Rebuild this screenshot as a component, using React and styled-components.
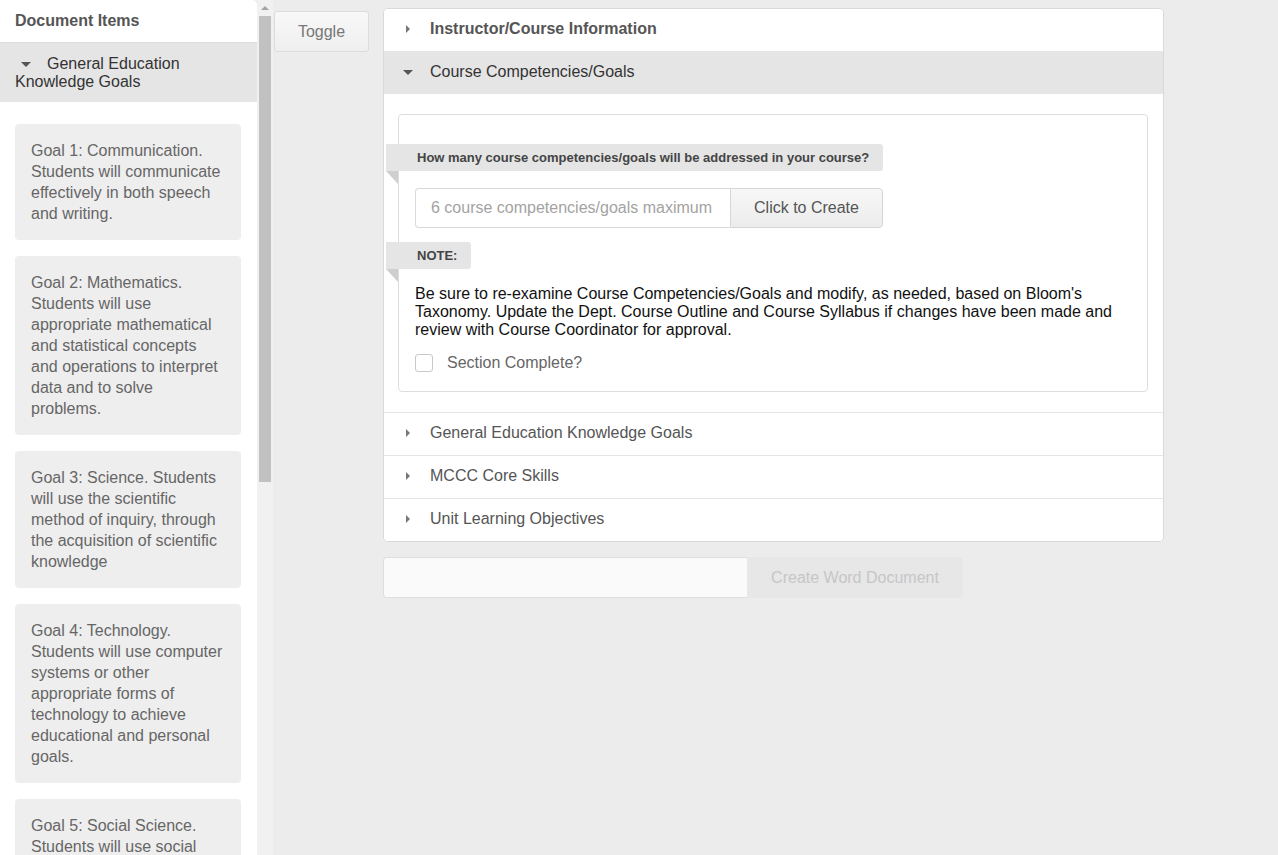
import React from "react";
import styled, { createGlobalStyle } from "styled-components";

const GlobalStyle = createGlobalStyle`
  html, body {
    margin: 0;
    padding: 0;
    height: 100%;
  }
  body {
    font-family: "Liberation Sans", Arial, sans-serif;
    background: #ececec;
  }
  * {
    box-sizing: border-box;
  }
`;

const goals = [
  "Goal 1: Communication. Students will communicate effectively in both speech and writing.",
  "Goal 2: Mathematics. Students will use appropriate mathematical and statistical concepts and operations to interpret data and to solve problems.",
  "Goal 3: Science. Students will use the scientific method of inquiry, through the acquisition of scientific knowledge",
  "Goal 4: Technology. Students will use computer systems or other appropriate forms of technology to achieve educational and personal goals.",
  "Goal 5: Social Science. Students will use social science theories and concepts to analyze human behavior and social and political institutions.",
  "Goal 6: Humanities. Students will analyze and evaluate humanistic perspectives and values.",
];

const sections = [
  { title: "Instructor/Course Information", bold: true },
  { title: "Course Competencies/Goals", open: true },
  { title: "General Education Knowledge Goals" },
  { title: "MCCC Core Skills" },
  { title: "Unit Learning Objectives" },
];

const App = () => {
  return (
    <>
      <GlobalStyle />
      <Page>
        <Sidebar>
          <SidebarHeader>Document Items</SidebarHeader>
          <GroupRow>
            <CaretSlot>
              <Caret open />
            </CaretSlot>
            General Education Knowledge Goals
          </GroupRow>
          <CardList>
            {goals.map((g) => (
              <GoalCard key={g}>{g}</GoalCard>
            ))}
          </CardList>
        </Sidebar>

        <ScrollTrack>
          <ScrollArrow />
          <ScrollThumb />
        </ScrollTrack>

        <ToggleCol>
          <ToggleButton>Toggle</ToggleButton>
        </ToggleCol>

        <Main>
          <Accordion>
            {sections.map((s) => (
              <Section key={s.title}>
                <SectionHead open={s.open} bold={s.bold}>
                  <HeadCaret>
                    <Caret open={s.open} />
                  </HeadCaret>
                  {s.title}
                </SectionHead>
                {s.open ? (
                  <SectionBody>
                    <InnerBox>
                      <Ribbon>
                        How many course competencies/goals will be addressed in
                        your course?
                      </Ribbon>
                      <InputGroup>
                        <CountInput placeholder="6 course competencies/goals maximum" />
                        <GroupButton>Click to Create</GroupButton>
                      </InputGroup>
                      <Ribbon>NOTE:</Ribbon>
                      <NoteText>
                        Be sure to re-examine Course Competencies/Goals and
                        modify, as needed, based on Bloom's Taxonomy. Update the
                        Dept. Course Outline and Course Syllabus if changes have
                        been made and review with Course Coordinator for
                        approval.
                      </NoteText>
                      <CheckRow>
                        <CheckBox />
                        Section Complete?
                      </CheckRow>
                    </InnerBox>
                  </SectionBody>
                ) : null}
              </Section>
            ))}
          </Accordion>

          <ExportRow>
            <FileInput />
            <ExportButton disabled>Create Word Document</ExportButton>
          </ExportRow>
        </Main>
      </Page>
    </>
  );
};

export default App;

const Page = styled.div`
  display: flex;
  align-items: flex-start;
  height: 100vh;
  overflow: hidden;
  background: #ececec;
`;

const Sidebar = styled.div`
  width: 257px;
  height: 100vh;
  flex-shrink: 0;
  background: #fff;
  border-top-right-radius: 5px;
  overflow: hidden;
`;

const SidebarHeader = styled.div`
  height: 43px;
  padding: 12px 15px 0;
  font-size: 16px;
  font-weight: 700;
  color: #555;
  border-bottom: 1px solid #dcdcdc;
`;

const GroupRow = styled.div`
  background: #e5e5e5;
  padding: 12px 15px 11px;
  font-size: 16px;
  line-height: 18px;
  color: #333;
`;

const CaretSlot = styled.span`
  display: inline-block;
  width: 32px;
  padding-left: 6px;
  vertical-align: middle;
  line-height: 0;
`;

const Caret = styled.span`
  display: inline-block;
  width: 0;
  height: 0;
  ${(p) =>
    p.open
      ? `
    border-left: 5px solid transparent;
    border-right: 5px solid transparent;
    border-top: 5px solid #555;
  `
      : `
    border-top: 4px solid transparent;
    border-bottom: 4px solid transparent;
    border-left: 4px solid #777;
  `}
`;

const CardList = styled.div`
  padding: 22px 16px 0 15px;
  display: flex;
  flex-direction: column;
  gap: 16px;
`;

const GoalCard = styled.div`
  background: #eee;
  border-radius: 4px;
  padding: 16px 14px 16px 16px;
  font-size: 16px;
  line-height: 21px;
  color: #666;
`;

const ScrollTrack = styled.div`
  width: 16px;
  height: 100vh;
  flex-shrink: 0;
  background: #f1f1f1;
  display: flex;
  flex-direction: column;
  align-items: center;
`;

const ScrollArrow = styled.div`
  width: 0;
  height: 0;
  margin: 6px 0 6px;
  border-left: 4px solid transparent;
  border-right: 4px solid transparent;
  border-bottom: 4px solid #a3a3a3;
`;

const ScrollThumb = styled.div`
  width: 12px;
  height: 466px;
  background: #c1c1c1;
`;

const ToggleCol = styled.div`
  padding: 11px 14px 0 1px;
  flex-shrink: 0;
`;

const ToggleButton = styled.button`
  width: 95px;
  height: 41px;
  border: 1px solid #dcdcdc;
  border-radius: 3px;
  background: linear-gradient(#f8f8f8, #efefef);
  font-family: "Liberation Sans", Arial, sans-serif;
  font-size: 16px;
  color: #777;
  cursor: pointer;
`;

const Main = styled.div`
  width: 781px;
  padding-top: 8px;
  flex-shrink: 0;
`;

const Accordion = styled.div`
  background: #fff;
  border: 1px solid #d9d9d9;
  border-radius: 5px;
  overflow: hidden;
`;

const Section = styled.div`
  & + & {
    border-top: 1px solid #e5e5e5;
  }
`;

const SectionHead = styled.div`
  height: 42px;
  display: flex;
  align-items: center;
  padding-left: 19px;
  padding-bottom: 2px;
  font-size: 16px;
  font-weight: ${(p) => (p.bold ? 700 : 400)};
  color: ${(p) => (p.open ? "#333" : "#555")};
  background: ${(p) => (p.open ? "#e5e5e5" : "#fff")};
`;

const HeadCaret = styled.span`
  width: 10px;
  margin-right: 17px;
  display: flex;
  justify-content: center;
  align-items: center;
`;

const SectionBody = styled.div`
  padding: 20px 15px 20px 14px;
`;

const InnerBox = styled.div`
  border: 1px solid #ddd;
  border-radius: 4px;
  padding: 29px 16px 19px 16px;
`;

const Ribbon = styled.div`
  position: relative;
  width: fit-content;
  margin-left: -29px;
  padding: 0 14px 0 31px;
  height: 27px;
  line-height: 27px;
  background: #e5e5e5;
  border-radius: 0 3px 3px 0;
  font-size: 13px;
  font-weight: 700;
  color: #444;

  &::after {
    content: "";
    position: absolute;
    left: 0;
    top: 100%;
    border-top: 13px solid #cfcfcf;
    border-left: 12px solid transparent;
  }
`;

const InputGroup = styled.div`
  display: flex;
  width: 468px;
  height: 40px;
  margin: 17px 0 14px;
`;

const CountInput = styled.input`
  width: 315px;
  height: 40px;
  border: 1px solid #d9d9d9;
  border-right: none;
  border-radius: 4px 0 0 4px;
  padding: 0 15px;
  font-family: "Liberation Sans", Arial, sans-serif;
  font-size: 16px;
  color: #333;
  outline: none;

  &::placeholder {
    color: #a3a3a3;
  }
`;

const GroupButton = styled.button`
  flex: 1;
  height: 40px;
  border: 1px solid #d6d6d6;
  border-radius: 0 4px 4px 0;
  background: linear-gradient(#f7f7f7, #ececec);
  font-family: "Liberation Sans", Arial, sans-serif;
  font-size: 16px;
  color: #555;
`;

const NoteText = styled.p`
  margin: 16px 0 0;
  font-size: 16px;
  line-height: 18px;
  color: #111;
`;

const CheckRow = styled.label`
  display: flex;
  align-items: center;
  margin-top: 15px;
  height: 18px;
  font-size: 16px;
  color: #666;
`;

const CheckBox = styled.span`
  width: 18px;
  height: 18px;
  border: 1px solid #c8c8c8;
  border-radius: 3px;
  background: #fff;
  margin-right: 14px;
`;

const ExportRow = styled.div`
  display: flex;
  margin-top: 15px;
  height: 41px;
`;

const FileInput = styled.div`
  width: 364px;
  height: 41px;
  background: #fafafa;
  border: 1px solid #dedede;
  border-right: none;
  border-radius: 4px 0 0 4px;
`;

const ExportButton = styled.button`
  width: 216px;
  height: 41px;
  border: none;
  border-radius: 0 4px 4px 0;
  background: #e7e7e7;
  font-family: "Liberation Sans", Arial, sans-serif;
  font-size: 16px;
  color: #c6c6c6;
`;
